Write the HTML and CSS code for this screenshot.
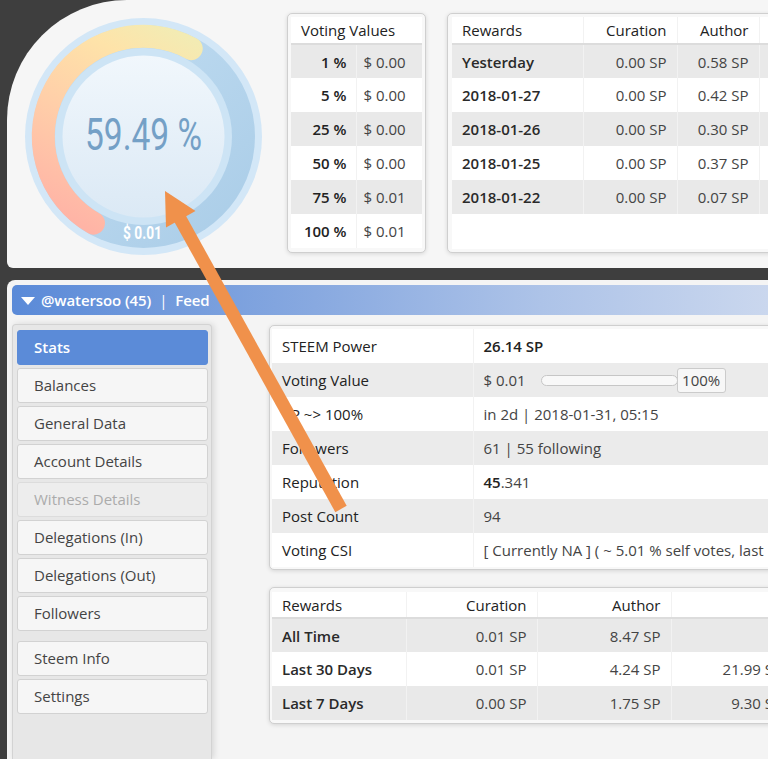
FILE: index.html
```html
<!DOCTYPE html>
<html>
<head>
<meta charset="utf-8">
<title>SteemWorld</title>
<link rel="stylesheet" href="styles.css">
</head>
<body>
<section class="top-panel">
  <div class="gauge">
    <svg width="237" height="237" viewBox="0 0 237 237">
      <defs>
        <linearGradient id="trk" x1="0" y1="0" x2="1" y2="1">
          <stop offset="0" stop-color="#c4dff3"/>
          <stop offset="1" stop-color="#a9cce7"/>
        </linearGradient>
        <linearGradient id="arcg" gradientUnits="userSpaceOnUse" x1="70" y1="215" x2="170" y2="25">
          <stop offset="0" stop-color="#ffb4a6"/>
          <stop offset="0.45" stop-color="#ffcfa9"/>
          <stop offset="0.8" stop-color="#fee3a9"/>
          <stop offset="1" stop-color="#f3ebb3"/>
        </linearGradient>
        <linearGradient id="face" x1="0" y1="0" x2="0" y2="1">
          <stop offset="0" stop-color="#f1f7fc"/>
          <stop offset="1" stop-color="#dbe9f5"/>
        </linearGradient>
      </defs>
      <circle cx="118.5" cy="118.5" r="118.5" fill="#d3e7f7"/>
      <circle cx="118.5" cy="118.5" r="111.5" fill="url(#trk)"/>
      <path d="M68.5 205.1 A100 100 0 0 1 166.2 30.6" fill="none" stroke="url(#arcg)" stroke-width="23" stroke-linecap="round"/>
      <circle cx="118.5" cy="118.5" r="88.5" fill="#cde4f5"/>
      <circle cx="118.5" cy="118.5" r="81" fill="url(#face)"/>
      <text class="g-pct" x="118.5" y="132" text-anchor="middle" textLength="117" lengthAdjust="spacingAndGlyphs">59.49 %</text>
      <text class="g-val" x="117.5" y="221" text-anchor="middle" textLength="39" lengthAdjust="spacingAndGlyphs">$ 0.01</text>
    </svg>
  </div>

  <div class="card vv-card">
    <table class="tbl vv">
      <colgroup><col class="c65"><col class="c66"></colgroup>
      <thead><tr><th colspan="2">Voting Values</th></tr></thead>
      <tbody>
        <tr><td>1 %</td><td>$ 0.00</td></tr>
        <tr><td>5 %</td><td>$ 0.00</td></tr>
        <tr><td>25 %</td><td>$ 0.00</td></tr>
        <tr><td>50 %</td><td>$ 0.00</td></tr>
        <tr><td>75 %</td><td>$ 0.01</td></tr>
        <tr><td>100 %</td><td>$ 0.01</td></tr>
      </tbody>
    </table>
  </div>

  <div class="card rw-card">
    <div class="inner">
      <table class="tbl rw">
        <colgroup><col class="c131"><col class="c94"><col class="c82"><col class="c90"></colgroup>
        <thead><tr><th>Rewards</th><th class="r">Curation</th><th class="r">Author</th><th class="r"></th></tr></thead>
        <tbody>
          <tr><td>Yesterday</td><td class="r">0.00 SP</td><td class="r">0.58 SP</td><td class="r"></td></tr>
          <tr><td>2018-01-27</td><td class="r">0.00 SP</td><td class="r">0.42 SP</td><td class="r"></td></tr>
          <tr><td>2018-01-26</td><td class="r">0.00 SP</td><td class="r">0.30 SP</td><td class="r"></td></tr>
          <tr><td>2018-01-25</td><td class="r">0.00 SP</td><td class="r">0.37 SP</td><td class="r"></td></tr>
          <tr><td>2018-01-22</td><td class="r">0.00 SP</td><td class="r">0.07 SP</td><td class="r"></td></tr>
        </tbody>
      </table>
    </div>
  </div>
</section>

<section class="main-panel">
  <div class="feed-bar"><span class="tri"></span>@watersoo (45)<span class="sep">|</span>Feed</div>
  <div class="lower">
    <nav class="sidebar">
      <div class="item active">Stats</div>
      <div class="item">Balances</div>
      <div class="item">General Data</div>
      <div class="item">Account Details</div>
      <div class="item disabled">Witness Details</div>
      <div class="item">Delegations (In)</div>
      <div class="item">Delegations (Out)</div>
      <div class="item">Followers</div>
      <div class="item group">Steem Info</div>
      <div class="item">Settings</div>
    </nav>
    <div class="content">
      <div class="card stats-card">
        <table class="tbl stats">
          <colgroup><col class="c201"><col class="c400"></colgroup>
          <tbody>
            <tr><td>STEEM Power</td><td><b>26.14 SP</b></td></tr>
            <tr><td>Voting Value</td><td><div class="vv-line">$ 0.01<span class="range"></span><span class="pct">100%</span></div></td></tr>
            <tr><td>VP ~&gt; 100%</td><td>in 2d | 2018-01-31, 05:15</td></tr>
            <tr><td>Followers</td><td>61 | 55 following</td></tr>
            <tr><td>Reputation</td><td><b>45</b>.341</td></tr>
            <tr><td>Post Count</td><td>94</td></tr>
            <tr><td>Voting CSI</td><td>[ Currently NA ] ( ~ 5.01 % self votes, last</td></tr>
          </tbody>
        </table>
      </div>
      <div class="card rw2-card">
        <table class="tbl rw2">
          <colgroup><col class="c134"><col class="c131"><col class="c134"><col class="c121"></colgroup>
          <thead><tr><th>Rewards</th><th class="r">Curation</th><th class="r">Author</th><th class="r"></th></tr></thead>
          <tbody>
            <tr><td>All Time</td><td class="r">0.01 SP</td><td class="r">8.47 SP</td><td class="r"></td></tr>
            <tr><td>Last 30 Days</td><td class="r">0.01 SP</td><td class="r">4.24 SP</td><td class="r">21.99 SP</td></tr>
            <tr><td>Last 7 Days</td><td class="r">0.00 SP</td><td class="r">1.75 SP</td><td class="r">9.30 SP</td></tr>
          </tbody>
        </table>
      </div>
    </div>
  </div>
</section>

<svg class="arrow" width="768" height="759" viewBox="0 0 768 759">
  <line x1="178" y1="215" x2="341" y2="509" class="arrow-shaft"/>
  <polygon points="165,191 195.5,211 166,227.5" class="arrow-head"/>
</svg>
</body>
</html>
```

FILE: styles.css
```css
* { box-sizing: border-box; }
html, body { margin: 0; height: 100%; overflow: hidden; }
body {
  background: #3e3e3e;
  font-family: "Open Sans", "Liberation Sans", sans-serif;
  font-size: 15px;
  color: #222;
  position: relative;
  width: 768px;
}

/* ---------- top panel ---------- */
.top-panel {
  margin-left: 7px;
  height: 268px;
  background: #f6f6f6;
  border-radius: 120px 0 0 6px;
  display: flex;
  align-items: flex-start;
  padding: 13px 0 0 18px;
  overflow: hidden;
}
.gauge { width: 237px; height: 237px; margin-top: 5px; flex: none; }
.gauge svg { display: block; }
.g-pct { font-family: Roboto, "Liberation Sans", sans-serif; font-weight: 400; font-size: 45px; fill: #74a0c6; }
.g-val { font-family: Roboto, "Liberation Sans", sans-serif; font-weight: 700; font-size: 19px; fill: #ffffff; }

.card {
  background: #f8f8f8;
  border: 1px solid #cfcfcf;
  border-radius: 5px;
  box-shadow: 0 1px 4px rgba(0, 0, 0, 0.13);
  padding: 3px;
  flex: none;
}
.vv-card { margin-left: 25px; height: 240px; }
.rw-card { margin-left: 21px; height: 240px; padding: 3px 0 3px 4px; }
.rw-card .inner { background: #fff; height: 232px; }

/* ---------- tables ---------- */
.tbl {
  border-collapse: collapse;
  table-layout: fixed;
  background: #fff;
}
.tbl th {
  font-weight: 400;
  height: 27px;
  padding: 0 10px;
  text-align: left;
  color: #222;
  border-bottom: 2px solid #dcdcdc;
  border-left: 1px solid #f2f2f2;
  white-space: nowrap;
  line-height: 20px;
}
.tbl th:first-child { border-left: none; }
.tbl td {
  height: 34px;
  padding: 0 10px;
  color: #444;
  border-left: 1px solid #f2f2f2;
  white-space: nowrap;
  line-height: 20px;
}
.tbl td:first-child { border-left: none; color: #2a2a2a; font-weight: 600; }
.tbl tbody tr:nth-child(odd) td { background: #e9e9e9; }
.tbl .r { text-align: right; }

.c65 { width: 65px; }
.c66 { width: 66px; }
.c82 { width: 82px; }
.c90 { width: 90px; }
.c94 { width: 94px; }
.c121 { width: 121px; }
.c131 { width: 131px; }
.c134 { width: 134px; }
.c201 { width: 201px; }
.c400 { width: 400px; }

.vv { width: 131px; }
.vv td:first-child { text-align: right; padding-right: 9px; color: #222; }
.vv td + td { padding-left: 7px; }
.rw { width: 397px; }

/* ---------- main panel ---------- */
.main-panel {
  margin: 12px 0 0 7px;
  height: 479px;
  background: #f4f4f4;
  border-radius: 8px 0 0 0;
  padding: 5px 0 0 5px;
  display: flex;
  flex-direction: column;
}
.feed-bar {
  height: 30px;
  flex: none;
  border-radius: 5px 0 0 5px;
  background: linear-gradient(to right, #5a8ad8 0%, #88a9e0 40%, #adc3e8 70%, #cad7ee 100%);
  color: #fff;
  font-weight: 600;
  font-size: 15px;
  display: flex;
  align-items: center;
  padding-left: 9px;
  letter-spacing: -0.1px;
}
.tri {
  width: 0; height: 0;
  border-left: 7px solid transparent;
  border-right: 7px solid transparent;
  border-top: 8px solid #fff;
  margin-right: 6px;
  margin-top: 1px;
}
.sep { margin: 0 8px 0 8px; font-weight: 400; }

.lower { flex: 1; display: flex; align-items: stretch; min-height: 0; }

.sidebar {
  width: 200px;
  flex: none;
  margin-top: 9px;
  background: #e7e7e7;
  border: 1px solid #d3d3d3;
  border-bottom: none;
  border-radius: 4px 4px 0 0;
  box-shadow: 2px 0 6px rgba(0, 0, 0, 0.12);
  padding: 5px 3px 5px 4px;
  display: flex;
  flex-direction: column;
  gap: 3px;
}
.item {
  height: 35px;
  border: 1px solid #d2d2d2;
  border-radius: 3px;
  background: #f6f6f6;
  color: #444;
  padding-left: 16px;
  display: flex;
  align-items: center;
  font-size: 15px;
  padding-bottom: 1px;
}
.item.active { background: #5b8bd8; border-color: #5b8bd8; color: #fff; font-weight: 600; }
.item.disabled { background: #ededed; border-color: #dcdcdc; color: #ababab; }
.item.group { margin-top: 7px; }

.content { margin: 10px 0 0 57px; display: flex; flex-direction: column; align-items: flex-start; gap: 17px; }

.stats-card { padding: 3px 2px 2px 2px; }
.stats { width: 601px; }
.stats td:first-child { font-weight: 400; color: #222; }
.stats tbody tr:nth-child(odd) td { background: #fff; }
.stats tbody tr:nth-child(even) td { background: #ebebeb; }
.stats b { font-weight: 600; color: #222; }

.vv-line { display: flex; align-items: center; }
.range {
  width: 137px;
  height: 11px;
  margin-left: 15px;
  border: 1px solid #c6c6c6;
  border-radius: 6px;
  background: #f8f8f8;
}
.pct {
  width: 49px;
  height: 25px;
  margin-left: -1px;
  border: 1px solid #cbcbcb;
  border-radius: 3px;
  background: #f7f7f7;
  display: flex;
  align-items: center;
  justify-content: center;
  color: #444;
}

.rw2-card { padding: 4px 2px 3px 2px; }
.rw2 { width: 520px; }
.rw2 th { height: 26px; }

/* ---------- annotation arrow ---------- */
.arrow { position: absolute; left: 0; top: 0; pointer-events: none; }
.arrow-shaft { stroke: #f0914b; stroke-width: 13; }
.arrow-head { fill: #f0914b; }
```
